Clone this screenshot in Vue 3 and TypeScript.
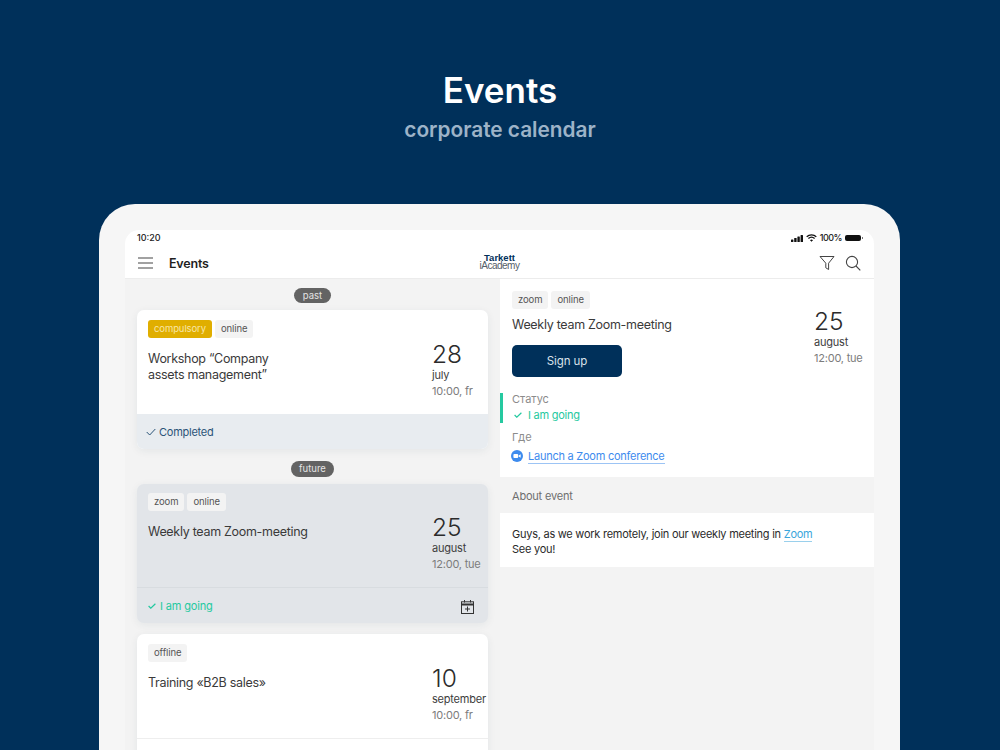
<script setup lang="ts">
interface EventCard {
  tags: { label: string; accent?: boolean }[]
  title: string
  day: string
  month: string
  time: string
  state: 'done' | 'going' | 'none'
  active?: boolean
}

const pastEvents: EventCard[] = [
  {
    tags: [{ label: 'compulsory', accent: true }, { label: 'online' }],
    title: 'Workshop “Company assets management”',
    day: '28',
    month: 'july',
    time: '10:00, fr',
    state: 'done',
  },
]

const futureEvents: EventCard[] = [
  {
    tags: [{ label: 'zoom' }, { label: 'online' }],
    title: 'Weekly team Zoom-meeting',
    day: '25',
    month: 'august',
    time: '12:00, tue',
    state: 'going',
    active: true,
  },
  {
    tags: [{ label: 'offline' }],
    title: 'Training «B2B sales»',
    day: '10',
    month: 'september',
    time: '10:00, fr',
    state: 'none',
  },
]
</script>

<template>
  <div class="page">
    <header class="hero">
      <h1>Events</h1>
      <p>corporate calendar</p>
    </header>

    <div class="tablet">
      <div class="screen">
        <div class="status-bar">
          <span>10:20</span>
          <div class="status-right">
            <svg width="12" height="7" viewBox="0 0 12 7" fill="#111">
              <rect x="0" y="4.5" width="2.4" height="2.5" rx=".5" />
              <rect x="3.2" y="3" width="2.4" height="4" rx=".5" />
              <rect x="6.4" y="1.5" width="2.4" height="5.5" rx=".5" />
              <rect x="9.6" y="0" width="2.4" height="7" rx=".5" />
            </svg>
            <svg width="11" height="8" viewBox="0 0 11 8" fill="none" stroke="#111" stroke-width="1.3">
              <path d="M.7 2.8a7 7 0 0 1 9.6 0" />
              <path d="M2.4 4.6a4.6 4.6 0 0 1 6.2 0" />
              <path d="M5.5 7.8 4 6.2a2.2 2.2 0 0 1 3 0z" fill="#111" stroke="none" />
            </svg>
            <span class="percent">100%</span>
            <span class="battery"></span>
          </div>
        </div>

        <nav class="nav">
          <svg class="burger" width="15" height="12" viewBox="0 0 15 12" stroke="#444" stroke-width="1.1">
            <path d="M0 1h15M0 6h15M0 11h15" />
          </svg>
          <span class="nav-title">Events</span>
          <div class="logo">
            <b>Tarkett</b>
            <span>iAcademy</span>
          </div>
          <div class="nav-icons">
            <svg width="16" height="16" viewBox="0 0 16 16" fill="none" stroke="#444" stroke-width="1">
              <path d="M1 1.5h14L9.6 8.2v6.3L6.8 12.8V8.2z" stroke-linejoin="round" />
            </svg>
            <svg width="16" height="16" viewBox="0 0 16 16" fill="none" stroke="#444" stroke-width="1.1">
              <circle cx="7" cy="7" r="5.6" />
              <path d="m11 11 4.3 4.3" />
            </svg>
          </div>
        </nav>

        <div class="columns">
          <section class="list">
            <div class="pill-row"><span class="pill">past</span></div>
            <article v-for="item in pastEvents" :key="item.title" class="card">
              <div class="card-main">
                <div class="card-text">
                  <div class="tags">
                    <span v-for="tag in item.tags" :key="tag.label" class="tag" :class="{ accent: tag.accent }">{{ tag.label }}</span>
                  </div>
                  <div class="card-title narrow">{{ item.title }}</div>
                </div>
                <div class="date">
                  <div class="day">{{ item.day }}</div>
                  <div class="month">{{ item.month }}</div>
                  <div class="time">{{ item.time }}</div>
                </div>
              </div>
              <div class="card-foot done">
                <svg width="10" height="8" viewBox="0 0 10 8" fill="none" stroke="#2b5478" stroke-width="1"><path d="m.7 4 3 3L9.3 1" /></svg>
                <span>Completed</span>
              </div>
            </article>

            <div class="pill-row second"><span class="pill">future</span></div>
            <article v-for="item in futureEvents" :key="item.title" class="card" :class="{ active: item.active }">
              <div class="card-main">
                <div class="card-text">
                  <div class="tags">
                    <span v-for="tag in item.tags" :key="tag.label" class="tag">{{ tag.label }}</span>
                  </div>
                  <div class="card-title">{{ item.title }}</div>
                </div>
                <div class="date">
                  <div class="day">{{ item.day }}</div>
                  <div class="month">{{ item.month }}</div>
                  <div class="time">{{ item.time }}</div>
                </div>
              </div>
              <div v-if="item.state === 'going'" class="card-foot going">
                <svg width="8" height="6" viewBox="0 0 8 6" fill="none" stroke="#25c9a0" stroke-width="1.2"><path d="m.6 3 2.2 2.2L7.4.8" /></svg>
                <span>I am going</span>
                <svg class="cal" width="13" height="14" viewBox="0 0 13 14" fill="none" stroke="#333" stroke-width="1">
                  <rect x=".5" y="1.8" width="12" height="11.7" />
                  <path d="M.5 4.5h12" stroke-width="2" />
                  <path d="M3.5 0v2.5M9.5 0v2.5M6.5 6.5v5M4 9h5" />
                </svg>
              </div>
              <div v-else class="card-foot blank"></div>
            </article>
          </section>

          <section class="detail">
            <div class="detail-top">
              <div class="detail-head">
                <div class="detail-text">
                  <div class="tags">
                    <span class="tag">zoom</span>
                    <span class="tag">online</span>
                  </div>
                  <div class="card-title">Weekly team Zoom-meeting</div>
                  <button class="sign-up">Sign up</button>
                </div>
                <div class="date">
                  <div class="day">25</div>
                  <div class="month">august</div>
                  <div class="time">12:00, tue</div>
                </div>
              </div>

              <div class="field status">
                <div class="label">Статус</div>
                <div class="value going-text">
                  <svg width="8" height="6" viewBox="0 0 8 6" fill="none" stroke="#25c9a0" stroke-width="1.2"><path d="m.6 3 2.2 2.2L7.4.8" /></svg>
                  I am going
                </div>
              </div>
              <div class="field">
                <div class="label">Где</div>
                <div class="value where">
                  <svg width="12" height="12" viewBox="0 0 12 12">
                    <circle cx="6" cy="6" r="6" fill="#3d8bee" />
                    <rect x="2.4" y="4" width="4.8" height="4" rx="1" fill="#fff" />
                    <path d="m7.7 5.6 2-1.3v3.4l-2-1.3z" fill="#fff" />
                  </svg>
                  <a href="#" class="link">Launch a Zoom conference</a>
                </div>
              </div>
            </div>

            <div class="about-label">About event</div>
            <div class="about">
              Guys, as we work remotely, join our weekly meeting in <a href="#" class="zoom-link">Zoom</a><br />
              See you!
            </div>
          </section>
        </div>
      </div>
    </div>
  </div>
</template>

<style>
html,
body {
  margin: 0;
  overflow: hidden;
  background: #00305a;
}
</style>

<style scoped>
.page {
  width: 1000px;
  height: 750px;
  overflow: hidden;
  background: #00305a;
  font-family: Inter, "Noto Sans", sans-serif;
  color: #2e2e2e;
}

.hero {
  height: 204px;
  padding-top: 70px;
  box-sizing: border-box;
  text-align: center;
}

.hero h1 {
  margin: 0;
  font-size: 35px;
  line-height: 40px;
  font-weight: 600;
  color: #fff;
}

.hero p {
  margin: 6px 0 0;
  font-size: 20.8px;
  line-height: 28px;
  font-weight: 600;
  color: #9db3c8;
}

.tablet {
  width: 801px;
  height: 560px;
  margin-left: 99px;
  padding: 26px 26px 0;
  box-sizing: border-box;
  background: #f6f6f6;
  border-radius: 36px 36px 0 0;
}

.screen {
  width: 749px;
  height: 534px;
  background: #f3f3f3;
  border-radius: 14px 14px 0 0;
  overflow: hidden;
}

.status-bar {
  height: 18px;
  padding: 0 11px 2px 12px;
  box-sizing: border-box;
  display: flex;
  align-items: center;
  justify-content: space-between;
  background: #fff;
  font-size: 9px;
  line-height: 12px;
  font-weight: 500;
  color: #222;
}

.status-right {
  display: flex;
  align-items: center;
  gap: 3px;
}

.percent {
  letter-spacing: -0.5px;
}

.battery {
  position: relative;
  width: 16px;
  height: 6px;
  margin: 0 2px 0 0;
  border-radius: 2px;
  background: #111;
}

.battery::after {
  content: "";
  position: absolute;
  left: 17px;
  top: 2px;
  width: 1px;
  height: 2px;
  background: #777;
}

.nav {
  height: 30px;
  padding: 0 13px;
  position: relative;
  display: flex;
  align-items: center;
  background: #fff;
  border-bottom: 1px solid #ececec;
}

.burger {
  margin-right: 16px;
}

.nav-title {
  font-size: 12.5px;
  font-weight: 600;
  letter-spacing: -0.2px;
  color: #1f1f1f;
}

.logo {
  position: absolute;
  left: 353px;
  top: 6px;
  width: 43px;
  text-align: center;
  line-height: 8px;
  font-size: 10px;
  color: #55606a;
  letter-spacing: -0.5px;
}

.logo b {
  display: block;
  font-family: "Liberation Sans", sans-serif;
  font-size: 9.5px;
  color: #00305a;
  letter-spacing: 0;
}

.logo span {
  display: block;
  font-family: "Liberation Sans", sans-serif;
  white-space: nowrap;
}

.nav-icons {
  margin-left: auto;
  display: flex;
  gap: 10px;
}

.columns {
  display: flex;
  height: 485px;
}

.list {
  width: 375px;
  flex: none;
  padding: 9px 12px 0;
  box-sizing: border-box;
}

.pill-row {
  display: flex;
  justify-content: center;
  margin-bottom: 7px;
}

.pill-row.second {
  margin: 12px 0 7px;
}

.pill {
  height: 15px;
  padding: 0 9px;
  border-radius: 8px;
  background: #636363;
  color: #e4e4e4;
  font-size: 9.5px;
  line-height: 15px;
}

.second .pill {
  height: 16px;
  line-height: 16px;
  padding: 0 8px;
}

.card {
  width: 351px;
  margin-bottom: 11px;
  border-radius: 7px;
  background: #fff;
  box-shadow: 0 2px 8px rgba(30, 50, 70, 0.07);
  overflow: hidden;
}

.card.active {
  background: #e2e5e9;
}

.card-main {
  height: 104px;
  padding: 10px 0 0 11px;
  box-sizing: border-box;
  display: flex;
  justify-content: space-between;
}

.card.active .card-main {
  padding-top: 9px;
  border-bottom: 1px solid #d8dce0;
}

.tags {
  display: flex;
  gap: 3px;
}

.tag {
  height: 18px;
  padding: 0 6px;
  border-radius: 3px;
  background: #f3f3f3;
  color: #555;
  font-size: 9.5px;
  line-height: 17px;
  letter-spacing: -0.1px;
}

.tag.accent {
  background: #e0ae00;
  color: #f8e6a6;
}

.card-title {
  margin-top: 13px;
  font-size: 12.5px;
  line-height: 16px;
  letter-spacing: -0.3px;
  color: #3a3a3a;
}

.card-title.narrow {
  width: 140px;
}

.date {
  width: 56px;
  flex: none;
  padding-top: 20.5px;
  white-space: nowrap;
}

.day {
  font-size: 24.5px;
  line-height: 27px;
  font-weight: 300;
  color: #2b2b2b;
}

.month {
  font-size: 11px;
  line-height: 14px;
  letter-spacing: -0.22px;
  color: #3d3d3d;
}

.time {
  font-size: 11px;
  line-height: 16px;
  letter-spacing: -0.22px;
  margin-top: 1px;
  color: #7c7c7c;
}

.card-foot {
  height: 35px;
  padding: 0 14px 0 9px;
  box-sizing: border-box;
  display: flex;
  align-items: center;
  gap: 3px;
  font-size: 11px;
  letter-spacing: -0.25px;
}

.card-foot.done {
  background: #e8ecf0;
  color: #2b5478;
}

.card-foot.going {
  color: #25c9a0;
  gap: 4px;
  padding-left: 11px;
  letter-spacing: -0.15px;
}

.card-foot.blank {
  border-top: 1px solid #eeeeee;
}

.cal {
  margin-left: auto;
  margin-top: 2px;
}

.detail {
  flex: 1;
  min-width: 0;
}

.detail-top {
  height: 198px;
  padding: 12px 0 0;
  box-sizing: border-box;
  background: #fff;
}

.detail-head {
  display: flex;
  justify-content: space-between;
  height: 102px;
  padding-left: 12px;
}

.detail-head .card-title {
  margin-top: 8px;
}

.detail-head .date {
  width: 60px;
  padding-top: 16.5px;
}

.sign-up {
  display: block;
  width: 110px;
  height: 32px;
  margin-top: 12px;
  border: 0;
  border-radius: 5px;
  background: #00305a;
  color: #d9e2ea;
  font: 11.5px Inter, sans-serif;
  letter-spacing: -0.1px;
}

.field {
  padding: 0 0 0 12px;
  margin-top: 8px;
}

.field.status {
  margin-top: 0;
  height: 30px;
  border-left: 3px solid #25c9a0;
  padding-left: 9px;
}

.label {
  font-size: 11px;
  line-height: 13px;
  color: #8b8b8b;
}

.value {
  display: flex;
  align-items: center;
  gap: 5px;
  font-size: 11px;
  line-height: 16px;
  letter-spacing: -0.25px;
  margin-top: 1px;
}

.value.where {
  margin-top: 4px;
}

.value.where svg {
  margin-left: -1px;
}

.going-text {
  color: #25c9a0;
  gap: 6px;
  padding-left: 2px;
}

.link {
  margin-top: 2px;
  color: #3d8bee;
  text-decoration: none;
  border-bottom: 1px solid #9cc4f5;
  line-height: 13px;
}

.about-label {
  height: 36px;
  padding-left: 12px;
  font-size: 11px;
  letter-spacing: -0.2px;
  line-height: 39px;
  color: #6e6e6e;
}

.about {
  height: 54px;
  padding: 14px 0 0 12px;
  box-sizing: border-box;
  background: #fff;
  font-size: 11px;
  line-height: 14.5px;
  letter-spacing: -0.25px;
  color: #2a2a2a;
}

.zoom-link {
  color: #3aa6dc;
  text-decoration: none;
  border-bottom: 1px solid #9ad0ec;
}
</style>
